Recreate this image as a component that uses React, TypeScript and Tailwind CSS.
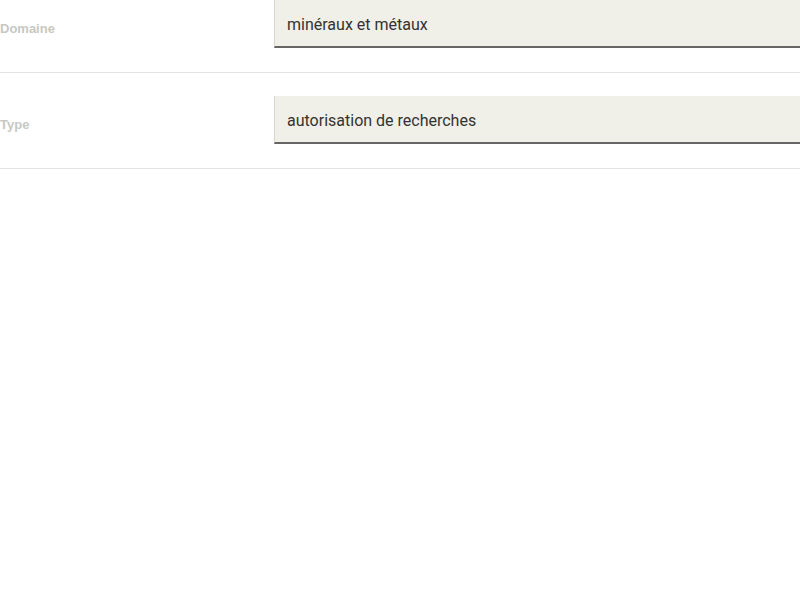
import React from "react";

const fields = [
  { label: "Domaine", value: "minéraux et métaux" },
  { label: "Type", value: "autorisation de recherches" },
];

export default function App() {
  return (
    <div className="w-[800px] bg-white">
      {fields.map((f, i) => (
        <div
          key={f.label}
          className={`flex items-center border-b border-[#e2e2e0] ${i === 0 ? "pb-6" : "pt-[23px] pb-6"}`}
        >
          <label className="w-[274px] pt-[9px] font-['Liberation_Sans',Arial,sans-serif] text-[13px] font-bold text-[#c8c8c1]">
            {f.label}
          </label>
          <div className="flex h-[48px] flex-1 items-center border-l border-b-2 border-l-[#d6d6ce] border-b-[#666666] bg-[#f0efe8] pl-3 pt-1 font-['Roboto',sans-serif] text-[16px] text-[#333333]">
            {f.value}
          </div>
        </div>
      ))}
    </div>
  );
}
